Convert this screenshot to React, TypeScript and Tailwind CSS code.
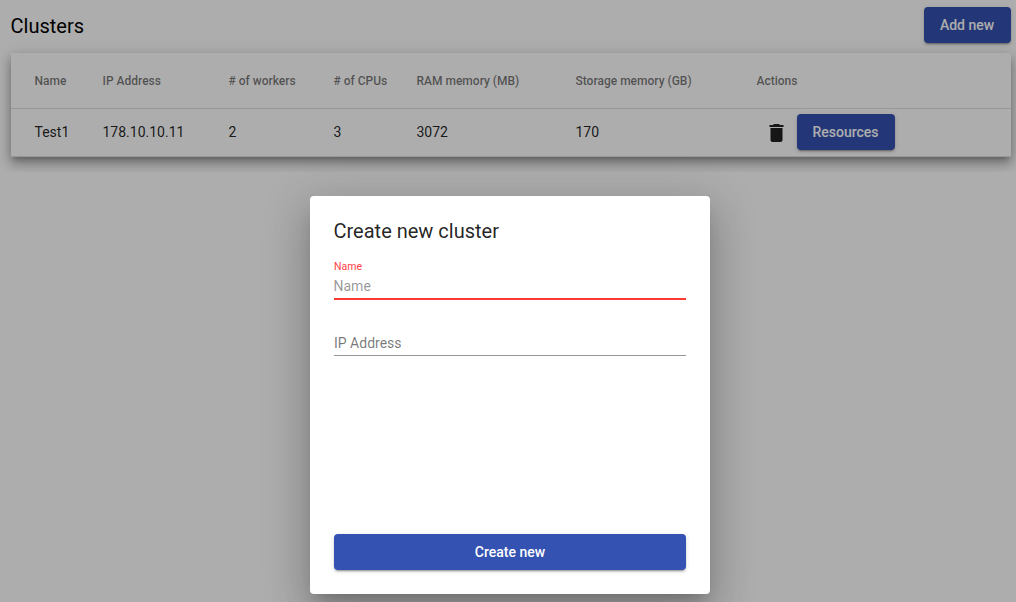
import React from "react";

const headers = ["Name", "IP Address", "# of workers", "# of CPUs", "RAM memory (MB)", "Storage memory (GB)", "Actions"];
const values = ["Test1", "178.10.10.11", "2", "3", "3072", "170"];
const columns = "grid grid-cols-[68px_126px_105px_83px_159px_181px_1fr] items-center pl-[23.5px]";
const elevation = "shadow-[0_3px_1px_-2px_rgba(0,0,0,0.2),0_2px_2px_0_rgba(0,0,0,0.14),0_1px_5px_0_rgba(0,0,0,0.12)]";

function Button({ className, children }: { className: string; children: React.ReactNode }) {
  return (
    <button className={`h-9 rounded text-sm font-medium text-white bg-[#3452b1] ${elevation} ${className}`}>
      {children}
    </button>
  );
}

export default function App() {
  return (
    <div className="relative h-[602px] w-[1016px] overflow-hidden bg-white font-['Roboto',sans-serif] text-black">
      <div className="h-[172px] overflow-hidden">
        <header className="flex h-[53px] items-start justify-between pl-[10.5px] pr-[5px] pt-[7px]">
          <h1 className="pt-[3px] text-xl leading-8 font-normal">Clusters</h1>
          <Button className="w-[87px] pr-px">Add new</Button>
        </header>
        <main className="ml-[11px] w-[1000px] bg-white shadow-[0_5px_5px_-3px_rgba(0,0,0,0.2),0_8px_10px_1px_rgba(0,0,0,0.14),0_3px_14px_2px_rgba(0,0,0,0.12),0_4px_10px_0_rgba(0,0,0,0.12)]">
          <div className={`${columns} h-14 border-b border-black/12 text-xs font-medium text-black/54`}>
            {headers.map((h) => <span key={h}>{h}</span>)}
          </div>
          <div className={`${columns} h-12 border-b border-black/12 pb-px text-sm text-black/87`}>
            {values.map((v) => <span key={v}>{v}</span>)}
            <span className="flex items-center pl-[8.5px]">
              <svg viewBox="0.5 0 24 24" className="mt-[2px] mr-2 size-6" fill="currentColor">
                <path d="M6 19c0 1.1.9 2 2 2h8c1.1 0 2-.9 2-2V7H6v12zM19 4h-3.5l-1-1h-5l-1 1H5v2h14V4z" />
              </svg>
              <Button className="w-[98px] pr-px">Resources</Button>
            </span>
          </div>
        </main>
      </div>
      <div className="absolute inset-0 bg-black/32" />
      <section className="absolute left-[310px] top-[196px] flex h-[398px] w-[400px] flex-col rounded bg-white p-6 text-black/87 shadow-[0_11px_15px_-7px_rgba(0,0,0,0.2),0_24px_38px_3px_rgba(0,0,0,0.14),0_9px_46px_8px_rgba(0,0,0,0.12)]">
        <h2 className="-mt-[5px] -ml-[0.5px] text-xl leading-8 font-normal">Create new cluster</h2>
        <label className="mt-[14px] flex h-[39px] flex-col border-b-2 border-[#ff3a35] text-[10.5px] leading-3 text-[#ff4045]">
          Name
          <input placeholder="Name" className="mt-[3px] -ml-[0.5px] block h-5 w-full text-sm outline-none placeholder:text-black/42" />
        </label>
        <label className="mt-[33px] h-[23px] border-b border-black/42 text-sm text-black/54">IP Address</label>
        <Button className="mt-auto w-full">Create new</Button>
      </section>
    </div>
  );
}
